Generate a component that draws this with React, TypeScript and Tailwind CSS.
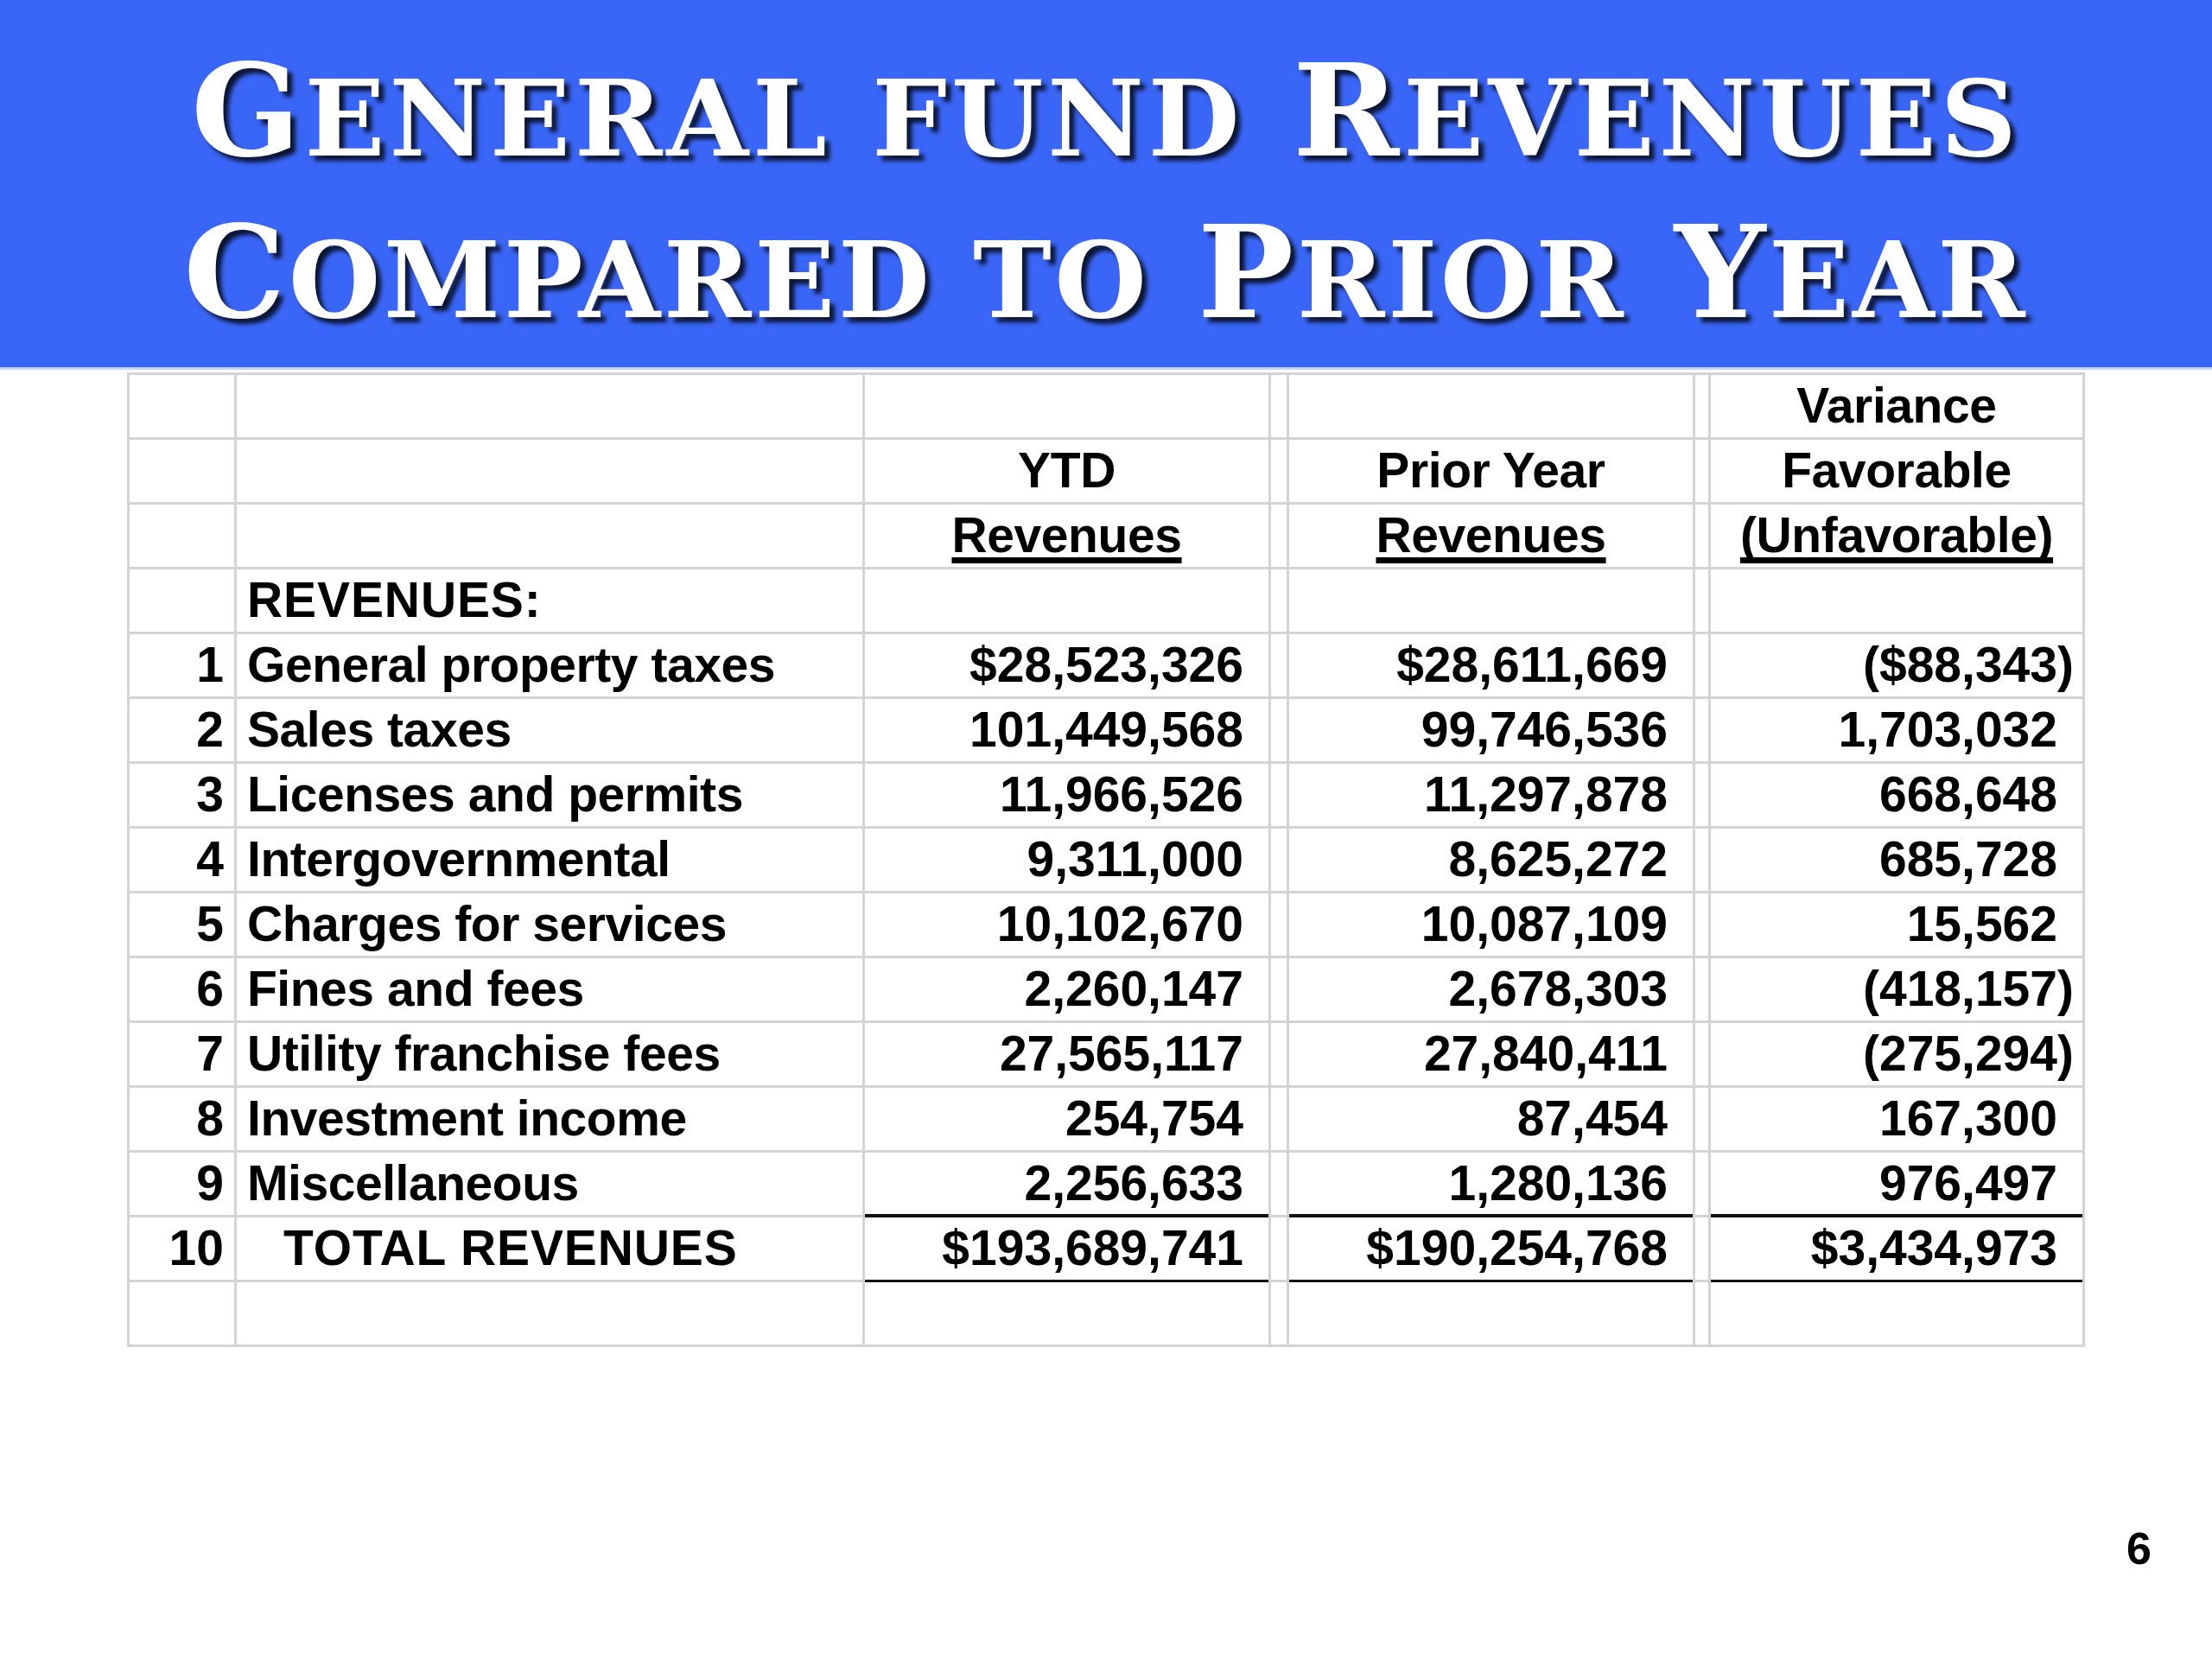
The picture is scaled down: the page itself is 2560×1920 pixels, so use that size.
import React from "react";

type Row = {
  n?: string;
  label?: string;
  ytd?: string;
  prior?: string;
  variance?: string;
  total?: boolean;
  caps?: boolean;
};

const rows: Row[] = [
  { label: "REVENUES:", caps: true },
  { n: "1", label: "General property taxes", ytd: "$28,523,326", prior: "$28,611,669", variance: "($88,343)" },
  { n: "2", label: "Sales taxes", ytd: "101,449,568", prior: "99,746,536", variance: "1,703,032" },
  { n: "3", label: "Licenses and permits", ytd: "11,966,526", prior: "11,297,878", variance: "668,648" },
  { n: "4", label: "Intergovernmental", ytd: "9,311,000", prior: "8,625,272", variance: "685,728" },
  { n: "5", label: "Charges for services", ytd: "10,102,670", prior: "10,087,109", variance: "15,562" },
  { n: "6", label: "Fines and fees", ytd: "2,260,147", prior: "2,678,303", variance: "(418,157)" },
  { n: "7", label: "Utility franchise fees", ytd: "27,565,117", prior: "27,840,411", variance: "(275,294)" },
  { n: "8", label: "Investment income", ytd: "254,754", prior: "87,454", variance: "167,300" },
  { n: "9", label: "Miscellaneous", ytd: "2,256,633", prior: "1,280,136", variance: "976,497" },
  { n: "10", label: "TOTAL REVENUES", ytd: "$193,689,741", prior: "$190,254,768", variance: "$3,434,973", total: true, caps: true },
  {},
];

function Num({ v, total }: { v?: string; total?: boolean }) {
  const neg = v ? v.endsWith(")") : false;
  return (
    <div
      className={
        "bg-white h-[72px] flex items-center justify-end pr-[10px] " +
        (total ? "shadow-[0_-4px_0_0_#111111,0_4px_0_0_#111111]" : "")
      }
    >
      {v ? (
        <span>
          {v}
          {!neg && <span className="invisible">)</span>}
        </span>
      ) : null}
    </div>
  );
}

function Head({ t, u }: { t?: string; u?: boolean }) {
  return (
    <div className="bg-white h-[72px] flex items-center justify-center">
      {t ? (
        <span
          className={
            u
              ? "underline [text-decoration-thickness:7px] [text-underline-offset:6px] [text-decoration-skip-ink:none] tracking-[-0.4px]"
              : "tracking-[-0.4px]"
          }
        >
          {t}
        </span>
      ) : null}
    </div>
  );
}

function Blank() {
  return <div className="bg-white h-[72px]" />;
}

export default function App() {
  return (
    <div className="w-[2560px] h-[1920px] bg-white overflow-hidden">
      <header className="h-[425px] bg-[#3a66f7] pt-[35px] text-white text-center font-['DejaVu_Serif','Liberation_Serif',serif] font-bold [text-shadow:6px_6px_5px_rgba(0,0,0,0.8)]">
        <div className="text-[148px] leading-[187px] tracking-[5px] whitespace-nowrap">
          G<span className="text-[122px] leading-none">ENERAL FUND</span> R
          <span className="text-[122px] leading-none">EVENUES</span>
        </div>
        <div className="text-[148px] leading-[187px] tracking-[3.8px] whitespace-nowrap">
          C<span className="text-[122px] leading-none">OMPARED TO</span> P
          <span className="text-[122px] leading-none">RIOR</span> Y
          <span className="text-[122px] leading-none">EAR</span>
        </div>
      </header>
      <div className="h-[3px] bg-[#c9d3f7]" />
      <div className="mt-[3px] ml-[147px] w-[2266px] grid grid-cols-[121px_724px_467px_18px_467px_15px_430px] gap-[3px] p-[3px] bg-[#d4d4d4] font-['Liberation_Sans',Arial,sans-serif] font-bold text-[57px] text-black leading-normal">
        {/* header row 1 */}
        <Blank />
        <Blank />
        <Head />
        <Blank />
        <Head />
        <Blank />
        <Head t="Variance" />
        {/* header row 2 */}
        <Blank />
        <Blank />
        <Head t="YTD" />
        <Blank />
        <Head t="Prior Year" />
        <Blank />
        <Head t="Favorable" />
        {/* header row 3 */}
        <Blank />
        <Blank />
        <Head t="Revenues" u />
        <Blank />
        <Head t="Revenues" u />
        <Blank />
        <Head t="(Unfavorable)" u />
        {rows.map((r, i) => (
          <React.Fragment key={i}>
            <div className="bg-white h-[72px] flex items-center justify-end pr-[12px]">{r.n}</div>
            <div
              className={
                "bg-white h-[72px] flex items-center whitespace-nowrap " +
                (r.caps ? "tracking-[0.9px] " : "tracking-[-0.45px] ") +
                (r.total ? "pl-[54px]" : "pl-[12px]")
              }
            >
              {r.label}
            </div>
            <Num v={r.ytd} total={r.total} />
            <Blank />
            <Num v={r.prior} total={r.total} />
            <Blank />
            <Num v={r.variance} total={r.total} />
          </React.Fragment>
        ))}
      </div>
      <div className="mt-[207px] flex justify-end pr-[70px] font-['Liberation_Sans',Arial,sans-serif] font-bold text-[52px] leading-none text-black">
        6
      </div>
    </div>
  );
}
